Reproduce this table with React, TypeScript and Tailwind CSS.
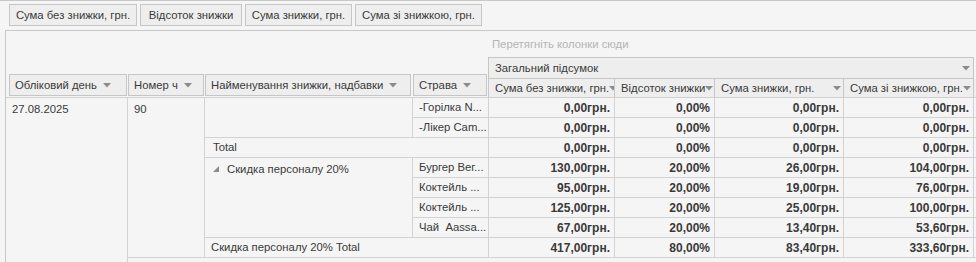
import React from "react";

const font = { fontFamily: '"Liberation Sans", Arial, sans-serif' };

function Arrow() {
  return (
    <svg width="8" height="5" viewBox="0 0 8 5" className="shrink-0">
      <polygon points="0,0 8,0 4,4.5" fill="#8c8c8c" />
    </svg>
  );
}

const topButtons = [
  { label: "Сума без знижки, грн.", w: "w-[128px]" },
  { label: "Відсоток знижки", w: "w-[102px]" },
  { label: "Сума знижки, грн.", w: "w-[107px]" },
  { label: "Сума зі знижкою, грн.", w: "w-[127px]" },
];

const rowFields = [
  { label: "Обліковий день", w: "w-[118px]", ml: "ml-[3px]" },
  { label: "Номер ч", w: "w-[76px]", ml: "ml-[1px]" },
  { label: "Найменування знижки, надбавки", w: "w-[206px]", ml: "ml-[1px]" },
  { label: "Страва", w: "w-[74px]", ml: "ml-[2px]" },
];

const colFields = [
  { label: "Сума без знижки, грн.", w: "w-[126px]", justify: "gap-0" },
  { label: "Відсоток знижки", w: "w-[100px]", justify: "gap-0" },
  { label: "Сума знижки, грн.", w: "w-[129px]", justify: "justify-between" },
  { label: "Сума зі знижкою, грн.", w: "w-[130px]", justify: "gap-0" },
];

type Row = { dish?: string; values: string[] };

const rows: Row[] = [
  { dish: "-Горілка N...", values: ["0,00грн.", "0,00%", "0,00грн.", "0,00грн."] },
  { dish: "-Лікер Cam...", values: ["0,00грн.", "0,00%", "0,00грн.", "0,00грн."] },
  { values: ["0,00грн.", "0,00%", "0,00грн.", "0,00грн."] },
  { dish: "Бургер Вег...", values: ["130,00грн.", "20,00%", "26,00грн.", "104,00грн."] },
  { dish: "Коктейль ...", values: ["95,00грн.", "20,00%", "19,00грн.", "76,00грн."] },
  { dish: "Коктейль ...", values: ["125,00грн.", "20,00%", "25,00грн.", "100,00грн."] },
  { dish: "Чай\u00a0 Aassa...", values: ["67,00грн.", "20,00%", "13,40грн.", "53,60грн."] },
  { values: ["417,00грн.", "80,00%", "83,40грн.", "333,60грн."] },
];

const rowStarts = [
  "row-start-1",
  "row-start-2",
  "row-start-3",
  "row-start-4",
  "row-start-5",
  "row-start-6",
  "row-start-7",
  "row-start-8",
];

const valueCols = ["col-start-5", "col-start-6", "col-start-7", "col-start-8"];

export default function App() {
  return (
    <div className="w-[976px] h-[262px] overflow-hidden bg-[#f5f5f5] text-[11.3px] text-[#3a3a3a] border-t border-[#c8c8c8]" style={font}>
      {/* field buttons */}
      <div className="flex h-[29px] pt-[3px] pl-[9px] gap-[3px]">
        {topButtons.map((b) => (
          <div
            key={b.label}
            className={`${b.w} h-[22px] flex items-center justify-center bg-[#eeeeee] border border-[#c6c6c6] whitespace-nowrap`}
          >
            {b.label}
          </div>
        ))}
      </div>

      <div className="ml-[5px] border-l border-t border-[#c8c8c8]">
        {/* header area */}
        <div className="flex h-[67px] border-b border-[#d0d0d0]">
          <div className="w-[482px] flex items-end pb-[1px]">
            {rowFields.map((f) => (
              <div
                key={f.label}
                className={`${f.w} ${f.ml} h-[22px] flex items-center gap-[6px] pl-[5px] bg-[#eeeeee] border border-[#c6c6c6] whitespace-nowrap`}
              >
                <span>{f.label}</span>
                <Arrow />
              </div>
            ))}
          </div>
          <div className="flex-1 flex flex-col">
            <div className="h-[26px] pl-[4px] flex items-center text-[#b4b4b4] whitespace-nowrap">
              Перетягніть колонки сюди
            </div>
            <div className="w-[486px] h-[22px] flex items-center justify-between pl-[6px] pr-[3px] bg-[#eeeeee] border border-[#c6c6c6]">
              <span>Загальний підсумок</span>
              <Arrow />
            </div>
            <div className="flex h-[18px] border-l border-[#c6c6c6] bg-[#eeeeee]">
              {colFields.map((f) => (
                <div
                  key={f.label}
                  className={`${f.w} ${f.justify} flex items-center pl-[6px] pr-[2px] border-r border-[#c6c6c6] whitespace-nowrap overflow-hidden`}
                >
                  <span>{f.label}</span>
                  <Arrow />
                </div>
              ))}
            </div>
          </div>
        </div>

        {/* data area */}
        <div className="grid grid-cols-[122px_77px_208px_76px_126px_100px_129px_130px_1fr] grid-rows-[repeat(9,20px)] [&>div]:border-[#d3d3d3]">
          <div className="col-start-1 row-start-1 row-span-9 border-r pl-[6px] pt-[3px]">27.08.2025</div>
          <div className="col-start-2 row-start-1 row-span-8 border-r border-b pl-[6px] pt-[3px]">90</div>
          <div className="col-start-3 row-start-1 row-span-2 border-r border-b" />
          <div className="col-start-3 col-span-2 row-start-3 border-r border-b pl-[8px] flex items-center">Total</div>
          <div className="col-start-3 row-start-4 row-span-4 border-r border-b pl-[8px] pt-[3px] flex items-start gap-[8px]">
            <svg width="6" height="6" viewBox="0 0 6 6" className="mt-[5px]">
              <polygon points="6,0 6,6 0,6" fill="#8c8c8c" />
            </svg>
            <span>Скидка персоналу 20%</span>
          </div>
          <div className="col-start-3 col-span-2 row-start-8 border-r border-b pl-[6px] flex items-center whitespace-nowrap">
            Скидка персоналу 20% Total
          </div>
          {rows.map((r, i) =>
            r.dish ? (
              <div
                key={`d${i}`}
                className={`col-start-4 ${rowStarts[i]} border-r border-b pl-[6px] flex items-center whitespace-nowrap overflow-hidden`}
              >
                {r.dish}
              </div>
            ) : null
          )}
          {rows.map((r, i) =>
            r.values.map((v, j) => (
              <div
                key={`v${i}-${j}`}
                className={`${valueCols[j]} ${rowStarts[i]} border-r border-b pr-[4px] flex items-center justify-end font-bold text-[12px] whitespace-nowrap`}
              >
                {v}
              </div>
            ))
          )}
          {rows.map((_, i) => (
            <div key={`e${i}`} className={`col-start-9 ${rowStarts[i]} border-b`} />
          ))}
        </div>
      </div>
    </div>
  );
}
